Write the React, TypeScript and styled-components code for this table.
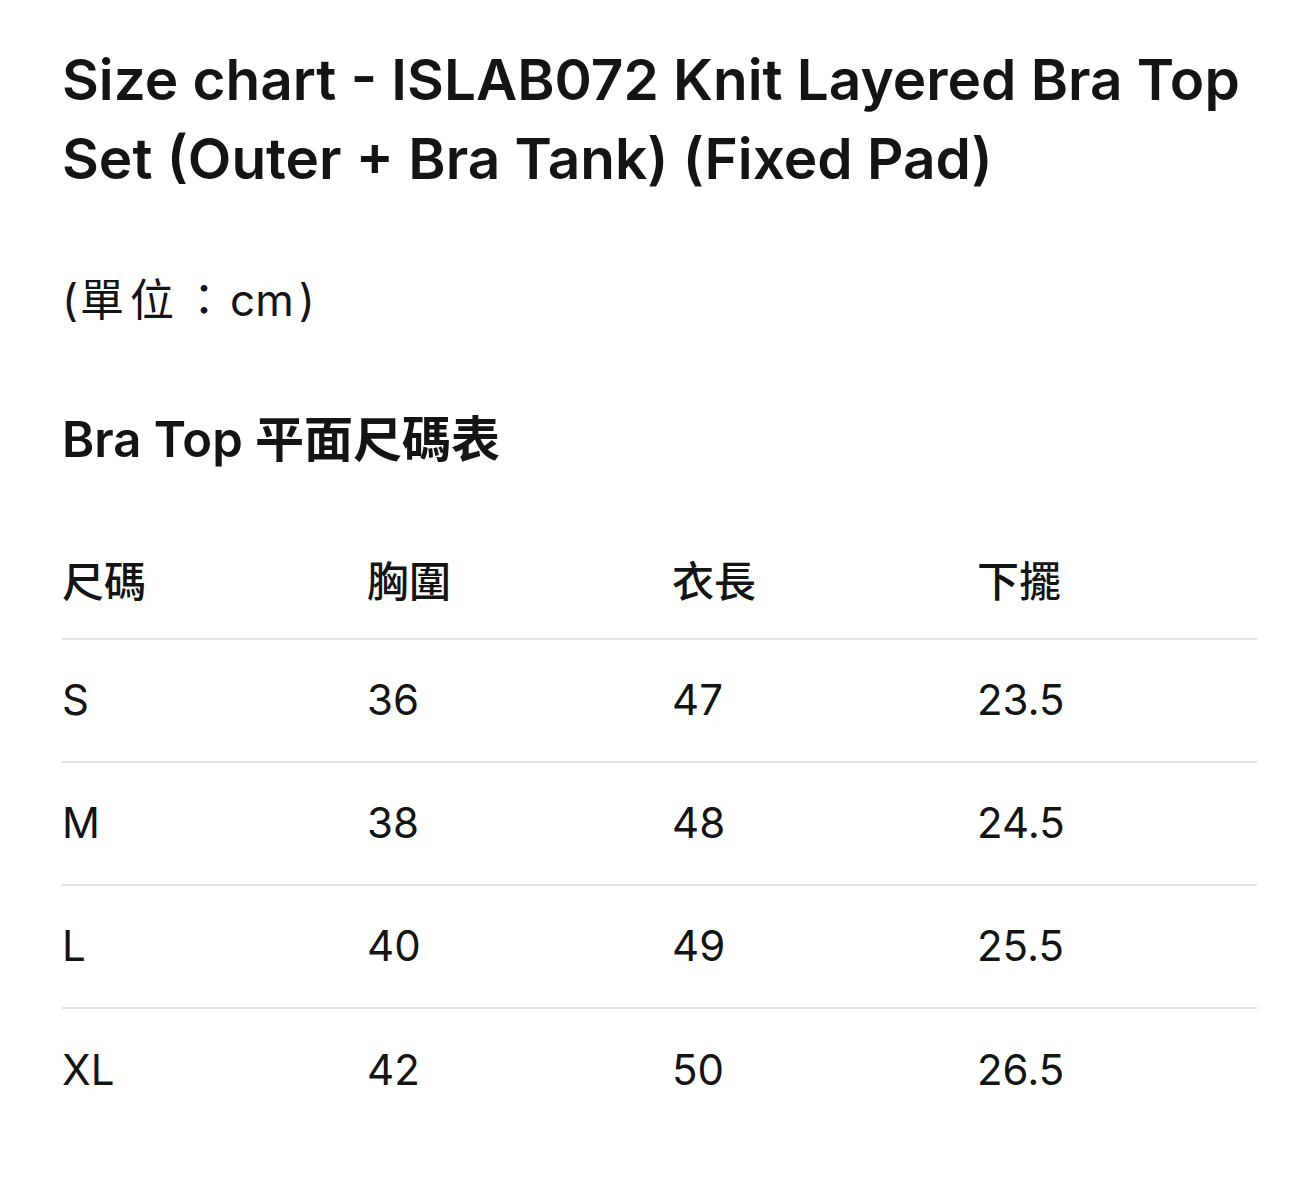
import React from 'react';
import styled, { createGlobalStyle } from 'styled-components';

const GlobalStyle = createGlobalStyle`
  html, body {
    margin: 0;
    padding: 0;
    background: #ffffff;
  }
  body {
    font-family: Inter, "Noto Sans CJK TC", "Noto Sans", sans-serif;
    color: #141414;
  }
`;

const Page = styled.main`
  padding: 40px 39px 80px 62px;
`;

const Title = styled.h1`
  margin: 0;
  font-size: 56.7px;
  line-height: 79px;
  font-weight: 600;
`;

const Unit = styled.p`
  margin: 72px 0 0;
  font-size: 44px;
  line-height: 60px;
  font-weight: 400;
`;

const UnitCjk = styled.span`
  margin-left: 2px;
  letter-spacing: 6px;
`;

const UnitColon = styled.span`
  margin: 0 4px 0 2px;
`;

const UnitClose = styled.span`
  margin-left: 5px;
`;

const SectionTitle = styled.h2`
  margin: 80px 0 0;
  font-size: 49px;
  line-height: 60px;
  font-weight: 600;
`;

const Table = styled.div`
  margin-top: 48px;
  display: grid;
  grid-template-columns: 305px 305px 305px 1fr;
`;

const Cell = styled.div<{ $head?: boolean; $last?: boolean }>`
  box-sizing: border-box;
  display: flex;
  align-items: center;
  height: ${p => (p.$head ? '122px' : '123px')};
  padding-bottom: ${p => (p.$head ? '0' : '2px')};
  font-size: 42px;
  font-weight: ${p => (p.$head ? 500 : 400)};
  border-bottom: ${p => (p.$last ? 'none' : '2px solid #e3e3e3')};
`;

const headers = ['尺碼', '胸圍', '衣長', '下擺'];

const rows = [
  ['S', '36', '47', '23.5'],
  ['M', '38', '48', '24.5'],
  ['L', '40', '49', '25.5'],
  ['XL', '42', '50', '26.5'],
];

const App: React.FC = () => {
  return (
    <>
      <GlobalStyle />
      <Page>
        <Title>Size chart - ISLAB072 Knit Layered Bra Top Set (Outer + Bra Tank) (Fixed Pad)</Title>
        <Unit>
          (<UnitCjk>單位</UnitCjk><UnitColon>：</UnitColon>cm<UnitClose>)</UnitClose>
        </Unit>
        <SectionTitle>Bra Top 平面尺碼表</SectionTitle>
        <Table>
          {headers.map(h => (
            <Cell key={h} $head>{h}</Cell>
          ))}
          {rows.map((row, i) =>
            row.map((v, j) => (
              <Cell key={`${i}-${j}`} $last={i === rows.length - 1}>{v}</Cell>
            ))
          )}
        </Table>
      </Page>
    </>
  );
};

export default App;
